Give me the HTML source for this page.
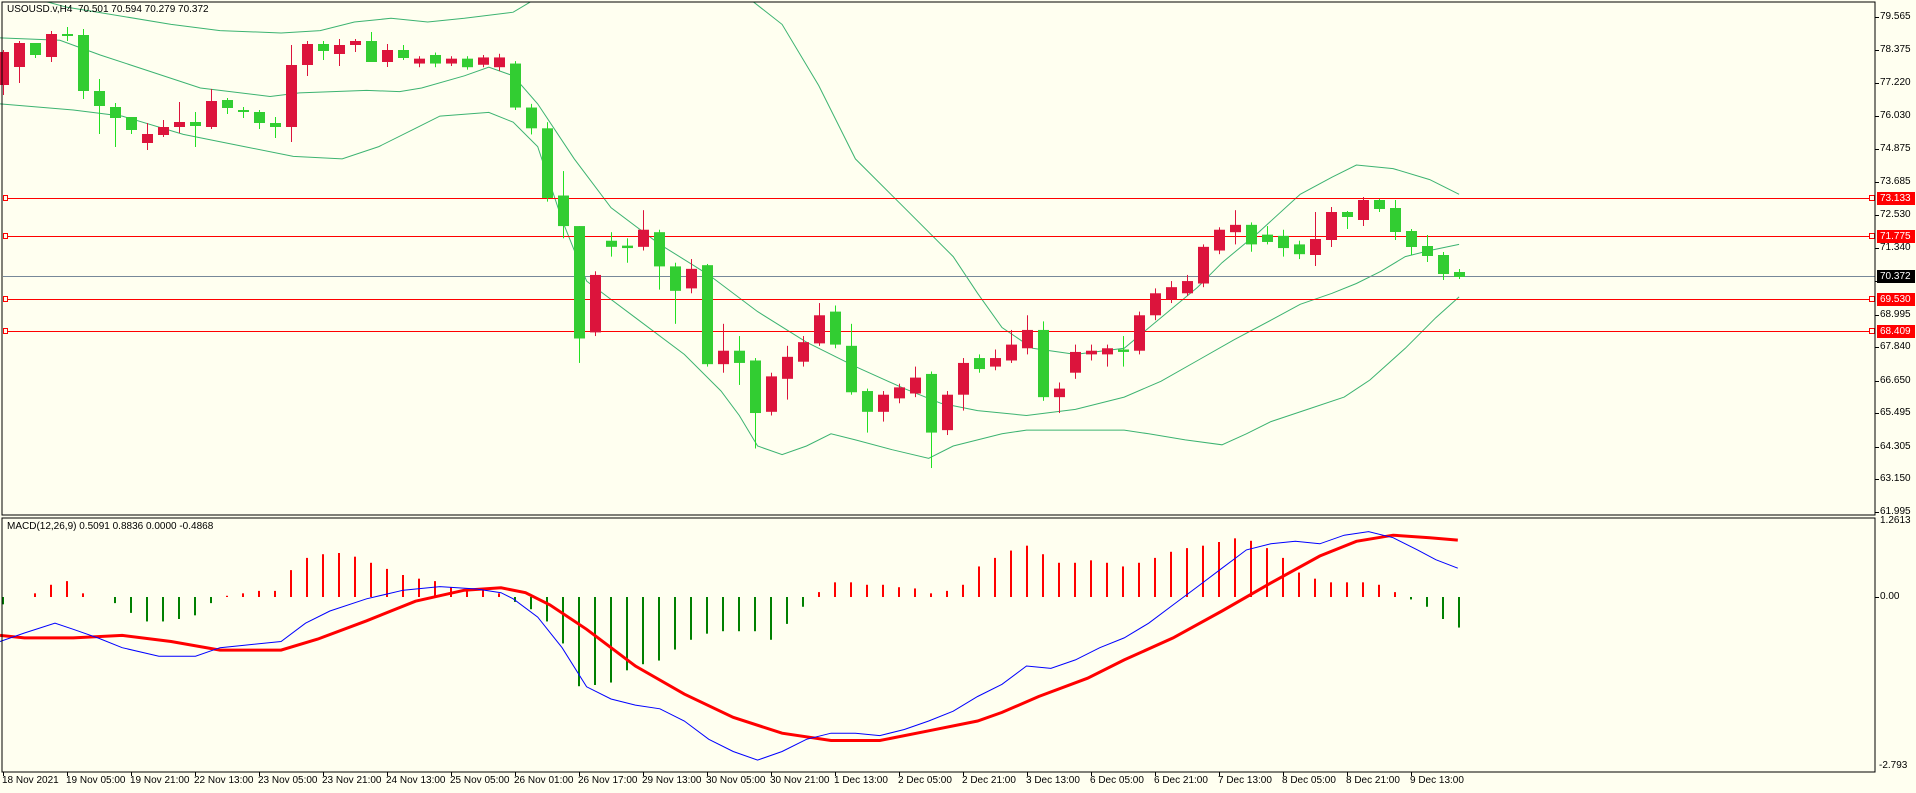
<!DOCTYPE html>
<html><head><meta charset="utf-8"><style>
html,body{margin:0;padding:0;background:#fffff0;width:1916px;height:793px;overflow:hidden;font-family:"Liberation Sans",sans-serif;font-size:10px;color:#000}
.t{position:absolute;white-space:nowrap;line-height:12px}
.pl{position:absolute;left:1880px;line-height:12px}
.box{position:absolute;left:1877px;width:38px;height:13px;color:#fff;line-height:13px;padding-left:3px;box-sizing:border-box}
svg{position:absolute;left:0;top:0}
</style></head><body>
<svg id="s" width="1916" height="793" xmlns="http://www.w3.org/2000/svg"></svg>
<div class="t" style="left:7px;top:4px">USOUSD.v,H4&nbsp; 70.501 70.594 70.279 70.372</div>
<div class="t" style="left:7px;top:521px">MACD(12,26,9) 0.5091 0.8836 0.0000 -0.4868</div>
<div id="labels"></div>
<div class="pl" style="top:515px">1.2613</div>
<div class="pl" style="top:591px">0.00</div>
<div class="pl" style="top:760px;left:1879px">-2.793</div>
<div class="box" style="top:192px;background:#ff0000">73.133</div>
<div class="box" style="top:230px;background:#ff0000">71.775</div>
<div class="box" style="top:270px;background:#000">70.372</div>
<div class="box" style="top:293px;background:#ff0000">69.530</div>
<div class="box" style="top:325px;background:#ff0000">68.409</div>
<div id="times"></div>
<script>
var S=document.getElementById('s'),NS='http://www.w3.org/2000/svg';
function el(n,a){var e=document.createElementNS(NS,n);for(var k in a)e.setAttribute(k,a[k]);S.appendChild(e);return e;}
var K=1.222;
var up=[[0,-5],[40,2],[55,6],[80,10],[140,20],[180,25],[230,27],[262,25],[290,18],[320,15],[350,18],[380,15],[420,10],[440,-2]];
var up2=[[612,-2],[640,20],[670,70],[700,130],[740,170],[780,210],[800,240],[820,268],[845,285],[880,290],[920,285],[950,260],[980,235],[1000,215],[1030,190],[1064,159],[1090,145],[1110,135],[1140,138],[1170,147],[1194,159]];
var mid=[[0,31],[49,33],[82,45],[164,72],[221,79],[245,76],[300,74],[327,75],[345,72],[380,62],[400,55],[420,62],[440,85],[470,130],[500,170],[540,200],[580,225],[620,255],[660,280],[700,300],[740,318],[770,330],[800,336],[840,340],[880,335],[920,325],[950,312],[980,295],[1010,278],[1040,262],[1064,249],[1090,240],[1110,232],[1130,222],[1150,210],[1170,205],[1194,200]];
var lo=[[0,85],[60,90],[100,95],[150,110],[200,120],[240,128],[280,130],[310,120],[340,105],[360,95],[400,92],[420,100],[440,120],[460,180],[480,230],[520,260],[560,290],[590,320],[605,340],[620,365],[640,372],[660,365],[680,355],[700,360],[730,368],[760,375],[780,365],[800,360],[820,355],[840,352],[870,352],[920,352],[940,355],[970,360],[1000,364],[1020,355],[1040,345],[1070,335],[1100,325],[1121,311],[1150,285],[1175,260],[1194,243]];
function pl(p,c,w){el('polyline',{points:p.map(function(q){return (q[0]*K).toFixed(1)+','+(q[1]*K).toFixed(1)}).join(' '),fill:'none',stroke:c,'stroke-width':w});}
[up,up2,mid,lo].forEach(function(p){pl(p,'#3cb371',1)});
[[198,'#ff0000'],[236,'#ff0000'],[299,'#ff0000'],[331,'#ff0000']].forEach(function(l){el('rect',{x:3,y:l[0],width:1872,height:1,fill:l[1]});el('rect',{x:1869.5,y:l[0]-2.5,width:5,height:5,fill:'#fffff0',stroke:'#ff0000','stroke-width':1});el('rect',{x:3.5,y:l[0]-2.5,width:4,height:5,fill:'#fffff0',stroke:'#ff0000','stroke-width':1});});
el('rect',{x:3,y:276,width:1872,height:1,fill:'#778899'});
var A=[[52,85,50,95,'r'],[43,67,41,83,'r'],[43,55,43,58,'g'],[34,57,31,62,'r'],[34,36,27,41,'g'],[35,91,29,99,'g'],[91,106,79,134,'g'],[107,118,103,147,'g'],[117,130,117,134,'g'],[134,143,123,150,'r'],[127,135,120,137,'r'],[122,127,102,133,'r'],[122,126,112,147,'g'],[101,127,89,129,'r'],[100,108,98,114,'g'],[110,112,107,118,'g'],[112,123,110,129,'g'],[123,127,117,138,'g'],[65,127,45,142,'r'],[44,65,41,76,'r'],[44,51,41,60,'g'],[45,54,39,66,'r'],[41,45,39,52,'r'],[41,62,32,62,'g'],[50,62,44,67,'r'],[50,58,45,60,'g']];
var B=[[48,52,46,55,'r'],[45,52,43,55,'g'],[48,52,46,54,'r'],[48,55,46,57,'g'],[47,53,45,55,'r'],[47,55,44,58,'r'],[52,88,50,90,'g'],[88,105,85,110,'g'],[105,162,100,165,'g'],[160,185,140,195,'g'],[185,277,185,297,'g'],[225,272,222,275,'r'],[197,202,190,210,'g'],[201,203,195,215,'g'],[188,202,172,205,'r'],[190,218,188,237,'g'],[218,238,215,265,'g'],[220,236,212,240,'r'],[217,298,216,300,'g'],[287,298,265,305,'r'],[287,297,275,315,'g'],[295,338,293,367,'g'],[308,337,305,340,'r'],[292,310,283,327,'r'],[280,296,275,300,'r'],[258,281,248,283,'r'],[255,282,250,285,'g'],[283,321,265,323,'g'],[320,337,318,354,'g'],[323,337,320,345,'r'],[317,326,314,330,'r'],[309,322,300,325,'r'],[306,354,304,383,'g'],[323,352,320,356,'r'],[297,323,293,336,'r'],[293,302,290,305,'g'],[293,300,286,303,'r'],[282,295,270,297,'r'],[270,285,258,290,'r'],[270,325,263,328,'g'],[318,325,313,338,'r'],[288,305,282,310,'r'],[287,290,282,295,'r'],[285,290,282,300,'r'],[286,288,275,300,'g'],[258,287,255,290,'r'],[240,258,236,262,'r'],[235,245,230,248,'r'],[230,240,225,242,'r'],[202,232,200,235,'r'],[188,205,186,208,'r'],[184,190,172,200,'r'],[184,200,182,206,'g'],[192,198,185,200,'g'],[193,203,188,210,'g'],[200,208,197,212,'g']];
var C=[[239,255,212,266,'r'],[212,240,207,247,'r'],[212,217,211,229,'g'],[200,220,197,226,'r'],[200,209,199,212,'g'],[208,232,200,240,'g'],[231,247,229,255,'g'],[246,256,235,262,'g'],[255,274,252,280,'g'],[272,277,269,279,'g']];
B=B.map(function(c){return [c[0]*K,c[1]*K,c[2]*K,c[3]*K,c[4]]});
var all=A.concat(B,C);
all.forEach(function(c,i){var x=3+16*i;var col=c[4]=='r'?'#dc143c':'#32cd32',wc=c[4]=='r'?'#dc143c':'#22e022';
el('rect',{x:x,y:c[2],width:1,height:Math.max(1,c[3]-c[2]),fill:wc});
var h=Math.max(2,c[1]-c[0]);el('rect',{x:x-5,y:c[0],width:11,height:h,fill:col});});
el('rect',{x:0,y:0,width:1916,height:2,fill:'#fffff0'});
var H=[-6,0,3,10,13,3,0,-5,-13,-20,-20,-18,-15,-5,1,3,5,5,22,32,35,36,33,28,23,18,15,13,8,6,6,3,-4,-10,-20,-38,-73,-72,-70,-60,-55,-52,-43,-35,-30,-28,-28,-28,-35,-22,-8,4,12,12,10,10,8,7,3,5,10,25,32,38,42,35,28,28,30,28,25,28,32,37,40,42,45,48,46,40,32,20,15,12,12,12,10,4,-2,-8,-18,-25];
H.forEach(function(v,i){var x=2+16*i;var h=Math.abs(v)*K;if(h<1)return;el('rect',{x:x,y:v>0?597-h:597,width:2,height:h,fill:v>0?'#ff0000':'#008000'});});
var blue=[[0,525],[20,518],[45,510],[60,515],[80,522],[100,530],[130,537],[160,537],[180,530],[200,528],[230,525],[250,510],[270,500],[300,490],[330,483],[360,480],[390,482],[410,485],[420,490],[440,505],[460,530],[480,562],[500,572],[520,577],[540,580],[560,590],[580,605],[600,615],[620,622],[640,615],[660,605],[680,600],[700,600],[720,602],[740,597],[760,590],[780,582],[800,570],[820,560],[840,545],[860,547],[880,540],[900,530],[920,522],[940,510],[960,495],[980,480],[1000,465],[1020,450],[1040,445],[1060,443],[1080,445],[1100,438],[1120,435],[1140,440],[1160,450],[1175,458],[1193,465]];
var red=[[0,520],[20,522],[60,522],[100,520],[140,525],[180,532],[230,532],[260,523],[300,508],[340,492],[380,483],[410,481],[430,485],[450,495],[480,515],[520,545],[560,568],[600,587],[640,600],[680,606],[720,606],[760,598],[800,590],[820,583],[850,570],[890,555],[920,540],[960,522],[1000,500],[1040,477],[1080,455],[1110,443],[1140,438],[1170,440],[1193,442]];
pl(red,'#ff0000',3);pl(blue,'#0000ff',1);
el('rect',{x:2,y:2,width:1873,height:513,fill:'none',stroke:'#000','stroke-width':1});
el('rect',{x:2,y:518,width:1873,height:254,fill:'none',stroke:'#000','stroke-width':1});
var P=['79.565','78.375','77.220','76.030','74.875','73.685','72.530','71.340','70.185','68.995','67.840','66.650','65.495','64.305','63.150','61.995'],L=document.getElementById('labels'),hs='';
P.forEach(function(p){var y=198+(73.133-parseFloat(p))*28.16;el('rect',{x:1875,y:Math.round(y),width:4,height:1,fill:'#000'});hs+='<div class="pl" style="top:'+(Math.round(y)-6)+'px">'+p+'</div>';});
L.innerHTML=hs;
el('rect',{x:1875,y:597,width:4,height:1,fill:'#000'});
var T=['18 Nov 2021','19 Nov 05:00','19 Nov 21:00','22 Nov 13:00','23 Nov 05:00','23 Nov 21:00','24 Nov 13:00','25 Nov 05:00','26 Nov 01:00','26 Nov 17:00','29 Nov 13:00','30 Nov 05:00','30 Nov 21:00','1 Dec 13:00','2 Dec 05:00','2 Dec 21:00','3 Dec 13:00','6 Dec 05:00','6 Dec 21:00','7 Dec 13:00','8 Dec 05:00','8 Dec 21:00','9 Dec 13:00'],ts='';
T.forEach(function(t,i){var x=3+64*i;el('rect',{x:x,y:772,width:1,height:4,fill:'#000'});ts+='<div class="t" style="left:'+(x-1)+'px;top:775px">'+t+'</div>';});
document.getElementById('times').innerHTML=ts;
</script>
</body></html>
